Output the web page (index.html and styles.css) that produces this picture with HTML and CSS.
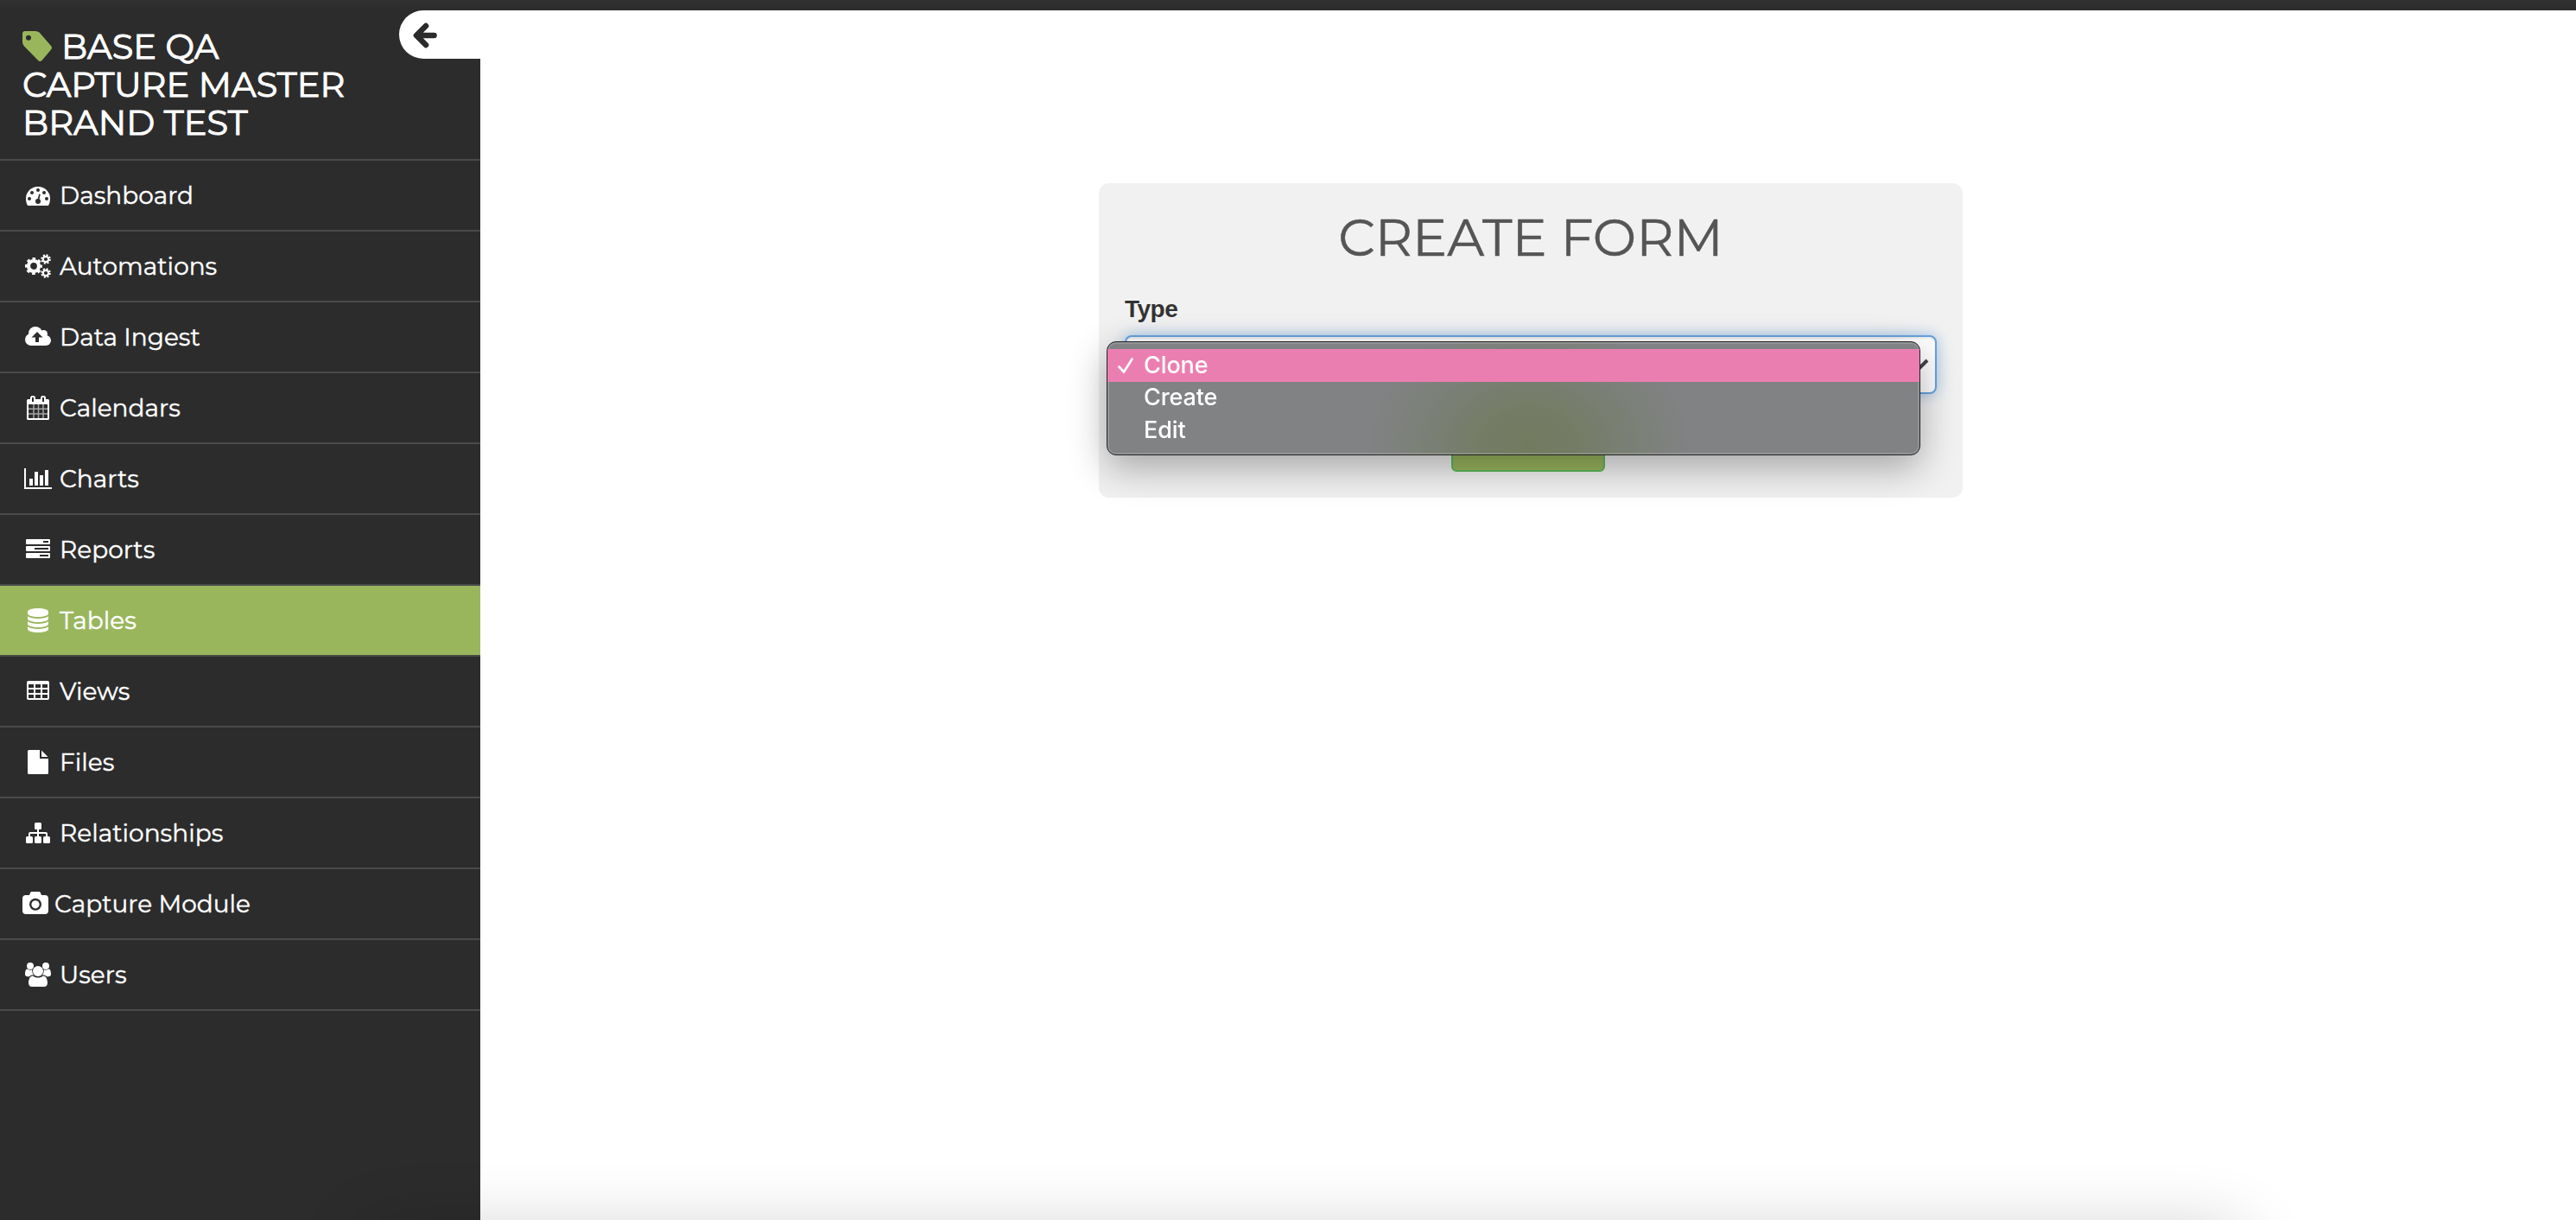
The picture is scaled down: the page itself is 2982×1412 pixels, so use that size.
FILE: index.html
```html
<!DOCTYPE html>
<html lang="en">
<head>
    <meta charset="UTF-8">
    <meta name="viewport" content="width=device-width, initial-scale=1.0">
    <title>Create Form</title>
    <link rel="stylesheet" href="styles.css">
</head>
<body>
    <div class="topbar"></div>
    <div class="wrapper">
        <nav class="sidebar">
            <div class="brand">
                <div class="brand-name">
                    <svg class="tag" viewBox="0 0 34 35"><path fill-rule="evenodd" d="M3 0h12c2 0 4 1 5 2l13 15c1.300 1.500 1.300 3 0 4.500L22.500 34c-1.300 1.300-3 1.300-4.300 0L2.500 18C1 16.500 0 14.500 0 12.500V3c0-2 1-3 3-3zM7 4.800a3 3 0 1 0 0 6 3 3 0 0 0 0-6z"/></svg><span>BASE QA</span><br><span>CAPTURE MASTER</span><br><span>BRAND TEST</span>
                </div>
                <button class="toggle">
                    <svg viewBox="0 0 28 30"><path d="M15 4L4 15l11 11M5 15h19.500" fill="none" stroke="#2b2b2b" stroke-width="6.600" stroke-linecap="round" stroke-linejoin="round"/></svg>
                </button>
            </div>
            <ul class="menu">
                <li>
                    <svg viewBox="0 0 32 32"><path d="M2 20a14 14 0 0 1 28 0c0 3-.7 5.200-1.600 7.200-.3.600-.6.800-1.200.8H4.800c-.6 0-.9-.2-1.200-.8C2.700 25.200 2 23 2 20z"/><g class="cut"><circle cx="6" cy="20" r="2"/><circle cx="9" cy="13" r="2"/><circle cx="16" cy="10" r="2"/><circle cx="23" cy="13" r="2"/><circle cx="26" cy="20" r="2"/><circle cx="16" cy="23" r="3"/><path d="M15.200 22l2-7.500 1.600.4-1.800 7.500z"/></g></svg>
                    <span>Dashboard</span>
                </li>
                <li>
                    <svg viewBox="0 0 32 32"><g fill="none" stroke="#fff"><circle cx="11" cy="16" r="6" stroke-width="4.200"/><circle cx="11" cy="16" r="8.500" stroke-width="3" stroke-dasharray="3.540 3.136" stroke-dashoffset="1.770"/><circle cx="25" cy="8" r="3.200" stroke-width="2.200"/><circle cx="25" cy="8" r="4.700" stroke-width="2.200" stroke-dasharray="1.990 1.700"/><circle cx="25" cy="24" r="3.200" stroke-width="2.200"/><circle cx="25" cy="24" r="4.700" stroke-width="2.200" stroke-dasharray="1.990 1.700"/></g></svg>
                    <span>Automations</span>
                </li>
                <li>
                    <svg viewBox="0 0 32 32"><circle cx="13" cy="12" r="8"/><circle cx="8" cy="19" r="7"/><circle cx="22.500" cy="12.500" r="4.500"/><circle cx="25" cy="20" r="6"/><path d="M8 12h16v14H8z"/><path class="cut" d="M15 10l6.500 6.500H17V22h-4v-5.500H8.500z"/></svg>
                    <span>Data Ingest</span>
                </li>
                <li>
                    <svg viewBox="0 0 32 32"><path fill-rule="evenodd" d="M4.500 6h23A1.500 1.500 0 0 1 29 7.500v21a1.500 1.500 0 0 1-1.500 1.500h-23A1.500 1.500 0 0 1 3 28.500v-21A1.500 1.500 0 0 1 4.500 6zM5 12v16h22V12z"/><path d="M11 12v16M16.500 12v16M22 12v16M5 17.300h22M5 23h22" stroke="#a5a5a5" stroke-width="1.500"/><rect x="7" y="2" width="6" height="8" rx="2.500"/><rect x="19" y="2" width="6" height="8" rx="2.500"/><path class="cut" d="M9 4h2v5H9zM21 4h2v5h-2z"/></svg>
                    <span>Calendars</span>
                </li>
                <li>
                    <svg viewBox="0 0 32 32"><path d="M0 4h2v22h30v2H0zM6 16h4v8H6zM12 8h4v16h-4zM18 12h4v12h-4zM24 6h4v18h-4z"/></svg>
                    <span>Charts</span>
                </li>
                <li>
                    <svg viewBox="0 0 32 32"><rect x="2" y="4" width="28" height="6" rx="1"/><rect x="2" y="12" width="28" height="6" rx="1"/><rect x="2" y="20" width="28" height="6" rx="1"/><path class="cut" d="M22 6h6v2h-6zM12 14h16v2H12zM18 22h10v2H18z"/></svg>
                    <span>Reports</span>
                </li>
                <li class="active">
                    <svg viewBox="0 0 32 32"><path d="M16 2c6.600 0 12 1.600 12 4v2c0 2.400-5.400 4-12 4S4 10.400 4 8V6c0-2.400 5.400-4 12-4z"/><path id="disk" d="M4 11.200c2.500 1.800 7 2.800 12 2.800s9.500-1 12-2.800V14c0 2.400-5.400 4-12 4S4 16.400 4 14z"/><use href="#disk" y="6"/><use href="#disk" y="12"/></svg>
                    <span>Tables</span>
                </li>
                <li>
                    <svg viewBox="0 0 32 32"><path fill-rule="evenodd" d="M5 4h22a2 2 0 0 1 2 2v18a2 2 0 0 1-2 2H5a2 2 0 0 1-2-2V6a2 2 0 0 1 2-2zM5 8v4h6V8zM13 8v4h6V8zM21 8v4h6V8zM5 14v4h6v-4zM13 14v4h6v-4zM21 14v4h6v-4zM5 20v4h6v-4zM13 20v4h6v-4zM21 20v4h6v-4z"/></svg>
                    <span>Views</span>
                </li>
                <li>
                    <svg viewBox="0 0 32 32"><path d="M5.500 2H18v10h10v16.500a1.500 1.500 0 0 1-1.500 1.500h-21A1.500 1.500 0 0 1 4 28.500v-25A1.500 1.500 0 0 1 5.500 2zM20 2.500l7.500 7.500H20z"/></svg>
                    <span>Files</span>
                </li>
                <li>
                    <svg viewBox="0 0 32 32"><rect x="12" y="4" width="8" height="8" rx="1.500"/><rect x="2" y="20" width="8" height="8" rx="1.500"/><rect x="12" y="20" width="8" height="8" rx="1.500"/><rect x="22" y="20" width="8" height="8" rx="1.500"/><path d="M16 11v10M6 21v-4c0-.6.400-1 1-1h18c.6 0 1 .4 1 1v4" fill="none" stroke="#fff" stroke-width="2"/></svg>
                    <span>Relationships</span>
                </li>
                <li class="camera">
                    <svg viewBox="0 0 32 32"><path d="M4 6h4l1-2.600C9.400 2.500 10.300 2 11.200 2h7.600c.9 0 1.800.5 2.200 1.400L22 6h4a4 4 0 0 1 4 4v14a4 4 0 0 1-4 4H4a4 4 0 0 1-4-4V10a4 4 0 0 1 4-4z"/><circle class="cut" cx="15" cy="16.800" r="7"/><circle cx="15" cy="16.800" r="4.600"/></svg>
                    <span>Capture Module</span>
                </li>
                <li>
                    <svg viewBox="0 0 32 32"><circle cx="7" cy="6" r="4"/><circle cx="25" cy="6" r="4"/><path d="M3.300 9.500C5 10.700 7.500 11 9.300 10.300 8.900 13 9.800 15 11 16.300c-2 .1-3.700.6-5 1.900H4c-1.800 0-3-1-3-2.700 0-2 .4-5.500 2.300-6zM28.700 9.500c-1.700 1.200-4.200 1.500-6 .8.400 2.700-.5 4.700-1.700 6 2 .1 3.700.6 5 1.900h2c1.800 0 3-1 3-2.700 0-2-.4-5.500-2.300-6z"/><circle cx="16" cy="12" r="6"/><path d="M10.300 17.500c3 2.800 8.400 2.800 11.400 0 4 0 5.300 4.300 5.300 8.200 0 2.700-1.700 4.300-4.200 4.300H9.200C6.700 30 5 28.400 5 25.700c0-3.900 1.300-8.200 5.300-8.200z"/></svg>
                    <span>Users</span>
                </li>
            </ul>
        </nav>
        <main class="content">
            <form class="card">
                <h1>CREATE FORM</h1>
                <label for="type">Type</label>
                <div class="select" id="type">
                    <svg class="chevron" viewBox="0 0 24 16"><path d="M2 3l10 10L22 3" fill="none" stroke="#444" stroke-width="4"/></svg>
                    <div class="dropdown">
                        <div class="option selected">
                            <svg viewBox="0 0 18 18"><path d="M1.500 10.500l5.500 6L16.500 1.500" fill="none" stroke="#fff" stroke-width="2.600" stroke-linecap="round" stroke-linejoin="round"/></svg>
                            <span>Clone</span>
                        </div>
                        <div class="option">Create</div>
                        <div class="option">Edit</div>
                    </div>
                </div>
                <button type="button" class="submit"></button>
            </form>
        </main>
    </div>
    <div class="overlay">
        <div class="bottom-shadow"></div>
    </div>
</body>
</html>
```
FILE: styles.css
```css
* {
    box-sizing: border-box;
}

body {
    margin: 0;
    height: 100vh;
    display: flex;
    flex-direction: column;
    background-color: #fff;
    font-family: Montserrat, Inter, sans-serif;
}

.topbar {
    height: 12px;
    flex: none;
    background: linear-gradient(to bottom, #313131, #2c2c2c);
}

.wrapper {
    flex: 1;
    display: flex;
}

/* Sidebar */
.sidebar {
    width: 556px;
    flex: none;
    background-color: #2c2c2c;
    color: #fff;
}

.brand {
    height: 174px;
    display: flex;
    justify-content: space-between;
    align-items: flex-start;
    border-bottom: 2px solid #4a4a4a;
}

.brand-name {
    padding: 20px 0 0 26px;
    font-size: 40px;
    line-height: 44px;
    font-weight: 400;
    white-space: nowrap;
    -webkit-text-stroke: 1px #fff;
}

.tag {
    width: 34px;
    height: 35px;
    margin-right: 11px;
    vertical-align: -3px;
    fill: #99b65d;
}

.toggle {
    width: 94px;
    height: 56px;
    padding: 4px 0 0 16px;
    border: none;
    border-radius: 28px 0 0 28px;
    background-color: #fff;
    text-align: left;
}

.toggle svg {
    width: 28px;
    height: 30px;
}

.menu {
    margin: 0;
    padding: 0;
    list-style: none;
}

.menu li {
    height: 82px;
    padding-left: 28px;
    display: flex;
    align-items: center;
    gap: 9px;
    border-bottom: 2px solid #4a4a4a;
    font-size: 28px;
    -webkit-text-stroke: 0.4px #fff;
}

.menu svg {
    width: 32px;
    height: 32px;
    fill: #fff;
}

.menu .cut {
    fill: #2c2c2c;
}

.menu .active {
    background-color: #99b65d;
}

.menu .camera {
    padding-left: 26px;
    gap: 5px;
}

/* Form */
.content {
    flex: 1;
    padding: 200px 0 0 6px;
}

.card {
    width: 1000px;
    height: 364px;
    margin: 0 auto;
    padding: 30px;
    border-radius: 12px;
    background-color: #f1f1f1;
}

.card h1 {
    margin: 0 0 28px;
    font-size: 60px;
    line-height: 66px;
    font-weight: 400;
    text-align: center;
    color: #555;
    -webkit-text-stroke: 0.5px #555;
}

.card label {
    display: block;
    height: 40px;
    margin-bottom: 12px;
    font-family: "Liberation Sans", Arial, sans-serif;
    font-size: 28px;
    line-height: 44px;
    font-weight: bold;
    letter-spacing: -0.5px;
    color: #333;
}

.select {
    position: relative;
    height: 68px;
    padding-right: 7px;
    display: flex;
    justify-content: flex-end;
    align-items: center;
    border: 2px solid #66a3e0;
    border-radius: 8px;
    background-color: #fff;
    box-shadow: inset 0 2px 2px rgba(0, 0, 0, 0.075), 0 0 16px rgba(102, 163, 224, 0.6);
}

.chevron {
    width: 24px;
    height: 16px;
}

.dropdown {
    position: absolute;
    z-index: 2;
    top: 5px;
    left: -23px;
    width: 942px;
    height: 132px;
    padding: 8px 0;
    border: 1px solid #222;
    border-radius: 11px;
    background: radial-gradient(ellipse 190px 150px at 488px 120px, #727a5e 0%, #757c66 30%, #7b8077 65%, rgba(129, 130, 132, 0) 100%), #818284;
    box-shadow: inset 0 0 0 2px rgba(255, 255, 255, 0.15), 0 14px 44px rgba(0, 0, 0, 0.32);
    font-family: Inter, sans-serif;
    font-size: 27px;
    font-weight: 500;
    letter-spacing: -0.1px;
    color: #fff;
}

.option {
    height: 38px;
    padding-left: 42px;
    line-height: 36px;
}

.option.selected {
    display: flex;
    align-items: center;
    gap: 12px;
    padding-left: 12px;
    background-color: #eb7eb1;
}

.option svg {
    width: 18px;
    height: 18px;
}

.submit {
    display: block;
    width: 178px;
    height: 68px;
    margin: 22px 0 0 378px;
    border: 2px solid #5cb85c;
    border-radius: 6px;
    background-color: #99b65d;
}

/* Soft shadow rising from the lower edge of the window */
.overlay {
    position: fixed;
    inset: 0;
    overflow: hidden;
    pointer-events: none;
}

.bottom-shadow {
    width: 2180px;
    height: 200px;
    margin: calc(100vh + 12px) 0 0 420px;
    border-radius: 30px;
    box-shadow: 0 0 80px rgba(0, 0, 0, 0.2);
}
```
